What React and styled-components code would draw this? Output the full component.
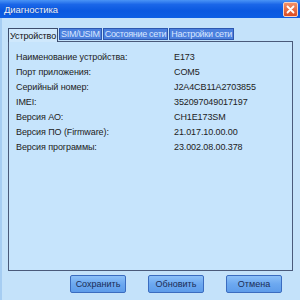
import React from "react";
import styled, { createGlobalStyle } from "styled-components";

const Global = createGlobalStyle`
  html, body { margin: 0; padding: 0; }
  body { width: 300px; height: 300px; overflow: hidden; font-family: "Liberation Sans", Arial, sans-serif; }
`;

const Window = styled.div`
  width: 300px;
  height: 300px;
  box-sizing: border-box;
  display: flex;
  flex-direction: column;
  background: #c4e2fa;
  border-left: 2px solid #a6cdf2;
`;

const TitleBar = styled.div`
  height: 18px;
  margin-left: -2px;
  display: flex;
  align-items: center;
  justify-content: space-between;
  padding: 0 2px 0 4px;
  background: linear-gradient(to bottom, #4a94f6 0%, #1a66e8 25%, #0a58e0 60%, #0c5ee4 100%);
`;

const Title = styled.span`
  color: #eef4ff;
  font-size: 9.5px;
  letter-spacing: -0.1px;
  text-shadow: 0 0 1px rgba(0, 0, 40, 0.4);
`;

const CloseBtn = styled.div`
  width: 13px;
  height: 13px;
  margin-top: 1px;
  border: 1px solid #f6d4c4;
  border-radius: 2px;
  background: linear-gradient(to bottom, #f49068, #dc4c22);
  display: flex;
  align-items: center;
  justify-content: center;
`;

const Body = styled.div`
  flex: 1;
  display: flex;
  flex-direction: column;
  padding: 9px 7px 0 6px;
`;

const TabRow = styled.div`
  display: flex;
  align-items: flex-end;
  height: 14px;
`;

const Tab = styled.div`
  box-sizing: border-box;
  height: ${(p) => (p.$active ? "14px" : "12px")};
  margin-bottom: ${(p) => (p.$active ? "-1px" : "1px")};
  margin-right: 1px;
  padding: 0 1px;
  display: flex;
  align-items: center;
  font-size: 9px;
  letter-spacing: ${(p) => (p.$active ? "-0.1px" : "-0.3px")};
  white-space: nowrap;
  border: 1px solid ${(p) => (p.$active ? "#3c4c6c" : "#2d58b0")};
  border-bottom: ${(p) => (p.$active ? "none" : "1px solid #2d58b0")};
  background: ${(p) => (p.$active ? "#cfe8fc" : "#4c80de")};
  color: ${(p) => (p.$active ? "#111" : "#d8e6ff")};
  position: relative;
  z-index: ${(p) => (p.$active ? 1 : 0)};
`;

const Panel = styled.div`
  box-sizing: border-box;
  height: 230px;
  border: 1px solid #4a5a7a;
  background: #c6e4fc;
  padding: 8px 0 0 7px;
  display: grid;
  grid-template-columns: 158px 1fr;
  grid-auto-rows: 15px;
  align-content: start;
`;

const Cell = styled.div`
  font-size: 9px;
  letter-spacing: -0.1px;
  color: #222;
  line-height: 15px;
  white-space: nowrap;
`;

const Footer = styled.div`
  display: flex;
  justify-content: flex-end;
  gap: 22px;
  padding: 4px 11px 0 0;
`;

const Button = styled.div`
  box-sizing: border-box;
  width: 56px;
  height: 18px;
  display: flex;
  align-items: center;
  justify-content: center;
  font-size: 9px;
  color: #1a2c56;
  border: 1px solid #3a6cc0;
  border-radius: 2px;
  background: linear-gradient(to bottom, #8cc0f8 0%, #6ca8f0 50%, #5e9cea 100%);
`;

const rows = [
  ["Наименование устройства:", "E173"],
  ["Порт приложения:", "COM5"],
  ["Серийный номер:", "J2A4CB11A2703855"],
  ["IMEI:", "352097049017197"],
  ["Версия АО:", "CH1E173SM"],
  ["Версия ПО (Firmware):", "21.017.10.00.00"],
  ["Версия программы:", "23.002.08.00.378"],
];

export default function App() {
  return (
    <>
      <Global />
      <Window>
        <TitleBar>
          <Title>Диагностика</Title>
          <CloseBtn>
            <svg width="9" height="9" viewBox="0 0 9 9">
              <path d="M1.5 1.5 L7.5 7.5 M7.5 1.5 L1.5 7.5" stroke="#fff" strokeWidth="1.8" strokeLinecap="round" />
            </svg>
          </CloseBtn>
        </TitleBar>
        <Body>
          <TabRow>
            <Tab $active>Устройство</Tab>
            <Tab>SIM/USIM</Tab>
            <Tab>Состояние сети</Tab>
            <Tab>Настройки сети</Tab>
          </TabRow>
          <Panel>
            {rows.map(([l, v]) => (
              <React.Fragment key={l}>
                <Cell>{l}</Cell>
                <Cell>{v}</Cell>
              </React.Fragment>
            ))}
          </Panel>
          <Footer>
            <Button>Сохранить</Button>
            <Button>Обновить</Button>
            <Button>Отмена</Button>
          </Footer>
        </Body>
      </Window>
    </>
  );
}
